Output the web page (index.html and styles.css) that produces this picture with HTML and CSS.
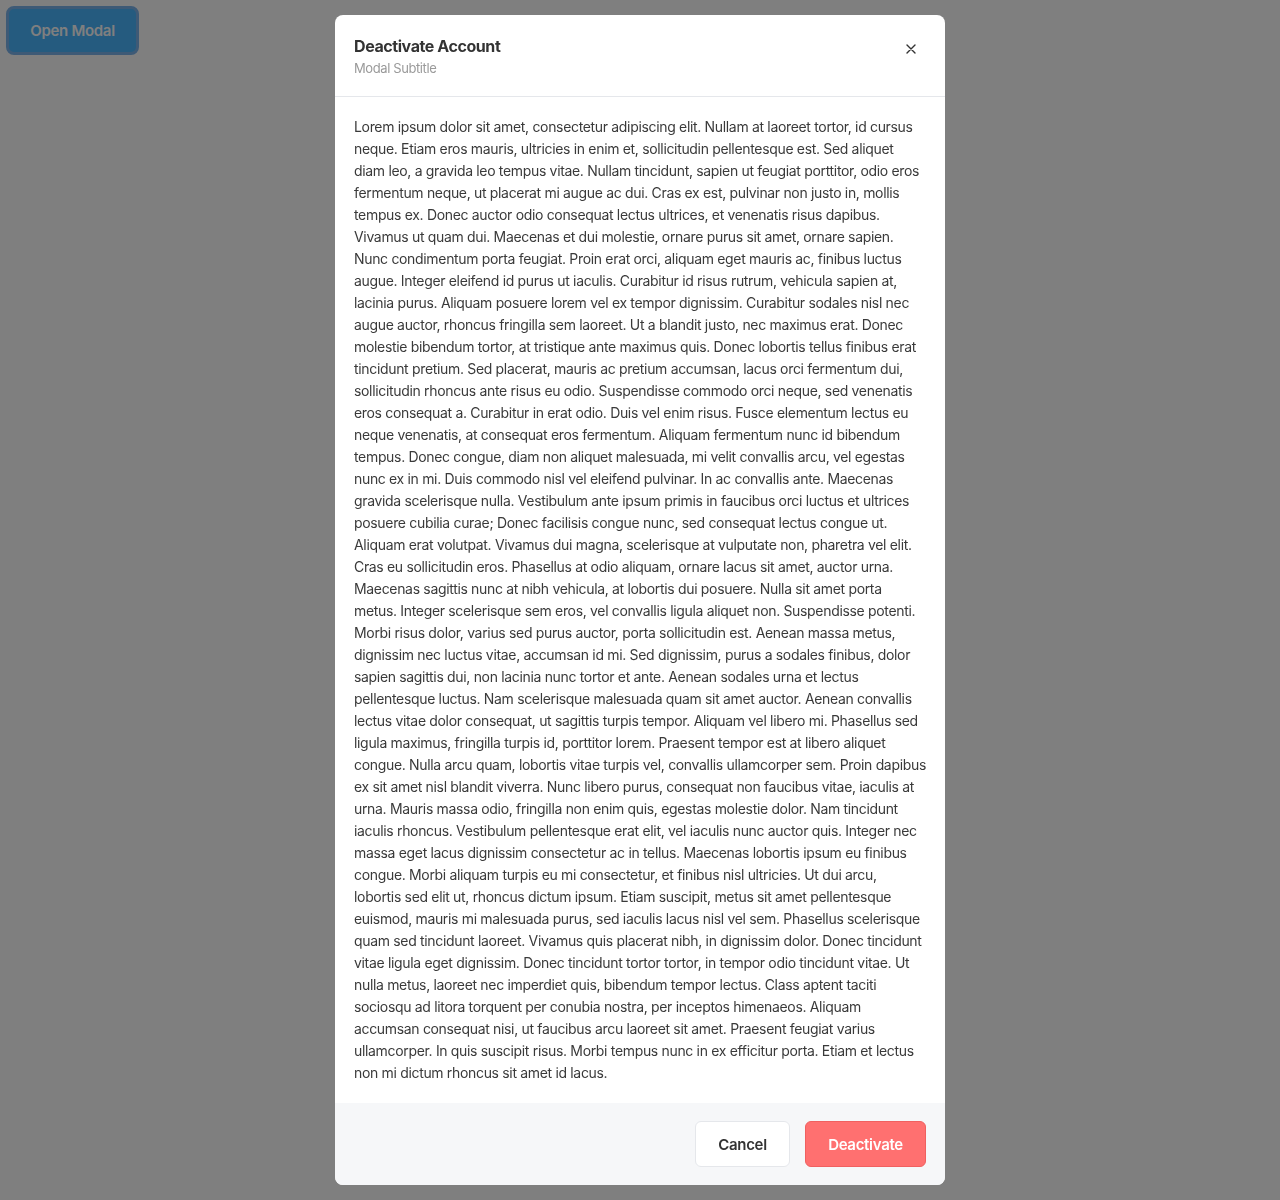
FILE: index.html
```html
<!DOCTYPE html>
<html lang="en">
<head>
<meta charset="utf-8">
<title>Modal</title>
<link rel="stylesheet" href="styles.css">
</head>
<body>
<button class="open-btn">Open Modal</button>
<div class="backdrop">
  <div class="modal">
    <div class="modal-header">
      <div class="titles">
        <h2 class="title">Deactivate Account</h2>
        <p class="subtitle">Modal Subtitle</p>
      </div>
      <button class="close" aria-label="Close">
        <svg width="10" height="10" viewBox="0 0 10 10"><path d="M1 1L9 9M9 1L1 9" stroke="#333" stroke-width="1.4" stroke-linecap="round"/></svg>
      </button>
    </div>
    <div class="modal-body">
      <p>Lorem ipsum dolor sit amet, consectetur adipiscing elit. Nullam at laoreet tortor, id cursus neque. Etiam eros mauris, ultricies in enim et, sollicitudin pellentesque est. Sed aliquet diam leo, a gravida leo tempus vitae. Nullam tincidunt, sapien ut feugiat porttitor, odio eros fermentum neque, ut placerat mi augue ac dui. Cras ex est, pulvinar non justo in, mollis tempus ex. Donec auctor odio consequat lectus ultrices, et venenatis risus dapibus. Vivamus ut quam dui. Maecenas et dui molestie, ornare purus sit amet, ornare sapien. Nunc condimentum porta feugiat. Proin erat orci, aliquam eget mauris ac, finibus luctus augue. Integer eleifend id purus ut iaculis. Curabitur id risus rutrum, vehicula sapien at, lacinia purus. Aliquam posuere lorem vel ex tempor dignissim. Curabitur sodales nisl nec augue auctor, rhoncus fringilla sem laoreet. Ut a blandit justo, nec maximus erat. Donec molestie bibendum tortor, at tristique ante maximus quis. Donec lobortis tellus finibus erat tincidunt pretium. Sed placerat, mauris ac pretium accumsan, lacus orci fermentum dui, sollicitudin rhoncus ante risus eu odio. Suspendisse commodo orci neque, sed venenatis eros consequat a. Curabitur in erat odio. Duis vel enim risus. Fusce elementum lectus eu neque venenatis, at consequat eros fermentum. Aliquam fermentum nunc id bibendum tempus. Donec congue, diam non aliquet malesuada, mi velit convallis arcu, vel egestas nunc ex in mi. Duis commodo nisl vel eleifend pulvinar. In ac convallis ante. Maecenas gravida scelerisque nulla. Vestibulum ante ipsum primis in faucibus orci luctus et ultrices posuere cubilia curae; Donec facilisis congue nunc, sed consequat lectus congue ut. Aliquam erat volutpat. Vivamus dui magna, scelerisque at vulputate non, pharetra vel elit. Cras eu sollicitudin eros. Phasellus at odio aliquam, ornare lacus sit amet, auctor urna. Maecenas sagittis nunc at nibh vehicula, at lobortis dui posuere. Nulla sit amet porta metus. Integer scelerisque sem eros, vel convallis ligula aliquet non. Suspendisse potenti. Morbi risus dolor, varius sed purus auctor, porta sollicitudin est. Aenean massa metus, dignissim nec luctus vitae, accumsan id mi. Sed dignissim, purus a sodales finibus, dolor sapien sagittis dui, non lacinia nunc tortor et ante. Aenean sodales urna et lectus pellentesque luctus. Nam scelerisque malesuada quam sit amet auctor. Aenean convallis lectus vitae dolor consequat, ut sagittis turpis tempor. Aliquam vel libero mi. Phasellus sed ligula maximus, fringilla turpis id, porttitor lorem. Praesent tempor est at libero aliquet congue. Nulla arcu quam, lobortis vitae turpis vel, convallis ullamcorper sem. Proin dapibus ex sit amet nisl blandit viverra. Nunc libero purus, consequat non faucibus vitae, iaculis at urna. Mauris massa odio, fringilla non enim quis, egestas molestie dolor. Nam tincidunt iaculis rhoncus. Vestibulum pellentesque erat elit, vel iaculis nunc auctor quis. Integer nec massa eget lacus dignissim consectetur ac in tellus. Maecenas lobortis ipsum eu finibus congue. Morbi aliquam turpis eu mi consectetur, et finibus nisl ultricies. Ut dui arcu, lobortis sed elit ut, rhoncus dictum ipsum. Etiam suscipit, metus sit amet pellentesque euismod, mauris mi malesuada purus, sed iaculis lacus nisl vel sem. Phasellus scelerisque quam sed tincidunt laoreet. Vivamus quis placerat nibh, in dignissim dolor. Donec tincidunt vitae ligula eget dignissim. Donec tincidunt tortor tortor, in tempor odio tincidunt vitae. Ut nulla metus, laoreet nec imperdiet quis, bibendum tempor lectus. Class aptent taciti sociosqu ad litora torquent per conubia nostra, per inceptos himenaeos. Aliquam accumsan consequat nisi, ut faucibus arcu laoreet sit amet. Praesent feugiat varius ullamcorper. In quis suscipit risus. Morbi tempus nunc in ex efficitur porta. Etiam et lectus non mi dictum rhoncus sit amet id lacus.</p>
    </div>
    <div class="modal-footer">
      <button class="btn btn-cancel">Cancel</button>
      <button class="btn btn-danger">Deactivate</button>
    </div>
  </div>
</div>
</body>
</html>
```
FILE: styles.css
```css
html, body {
  margin: 0;
  padding: 0;
}
body {
  background: #ffffff;
  font-family: Inter, "Noto Sans", sans-serif;
  height: 1200px;
  overflow: hidden;
}
.open-btn {
  margin: 6px;
  width: 133px;
  height: 49px;
  border: 3px solid #7cb5ec;
  border-radius: 8px;
  background: #4ab6ff;
  color: #ffffff;
  font-family: Inter, sans-serif;
  font-size: 15px;
  font-weight: 600;
  letter-spacing: -0.3px;
}
.backdrop {
  position: fixed;
  inset: 0;
  background: rgba(0, 0, 0, 0.5);
  display: flex;
  justify-content: center;
  align-items: flex-start;
  padding-top: 15px;
}
.modal {
  width: 610px;
  background: #ffffff;
  border-radius: 8px;
  overflow: hidden;
  display: flex;
  flex-direction: column;
}
.modal-header {
  display: flex;
  justify-content: space-between;
  align-items: flex-start;
  padding: 19px 19px 18px 19px;
  border-bottom: 1px solid #e5e7eb;
}
.title {
  margin: 0;
  font-size: 16px;
  line-height: 24px;
  font-weight: 700;
  color: #333333;
  letter-spacing: -0.42px;
}
.subtitle {
  margin: 0;
  font-size: 13px;
  line-height: 20px;
  color: #9a9a9a;
  letter-spacing: -0.4px;
}
.close {
  margin-top: 7px;
  margin-right: 7px;
  width: 16px;
  height: 16px;
  padding: 0;
  border: 0;
  background: transparent;
  display: flex;
  align-items: center;
  justify-content: center;
}
.modal-body {
  padding: 19px;
}
.modal-body p {
  margin: 0;
  font-size: 14px;
  line-height: 22px;
  color: #3a3a3a;
  letter-spacing: -0.33px;
}
.modal-footer {
  background: #f6f7f9;
  display: flex;
  justify-content: flex-end;
  gap: 15px;
  padding: 18px 19px;
}
.btn {
  height: 46px;
  border-radius: 6px;
  font-family: Inter, sans-serif;
  font-size: 15px;
  font-weight: 600;
  letter-spacing: -0.3px;
}
.btn-cancel {
  width: 95px;
  background: #ffffff;
  border: 1px solid #e5e7eb;
  color: #333333;
}
.btn-danger {
  width: 121px;
  background: #ff7070;
  border: 1px solid #f06060;
  color: #ffffff;
}
```
